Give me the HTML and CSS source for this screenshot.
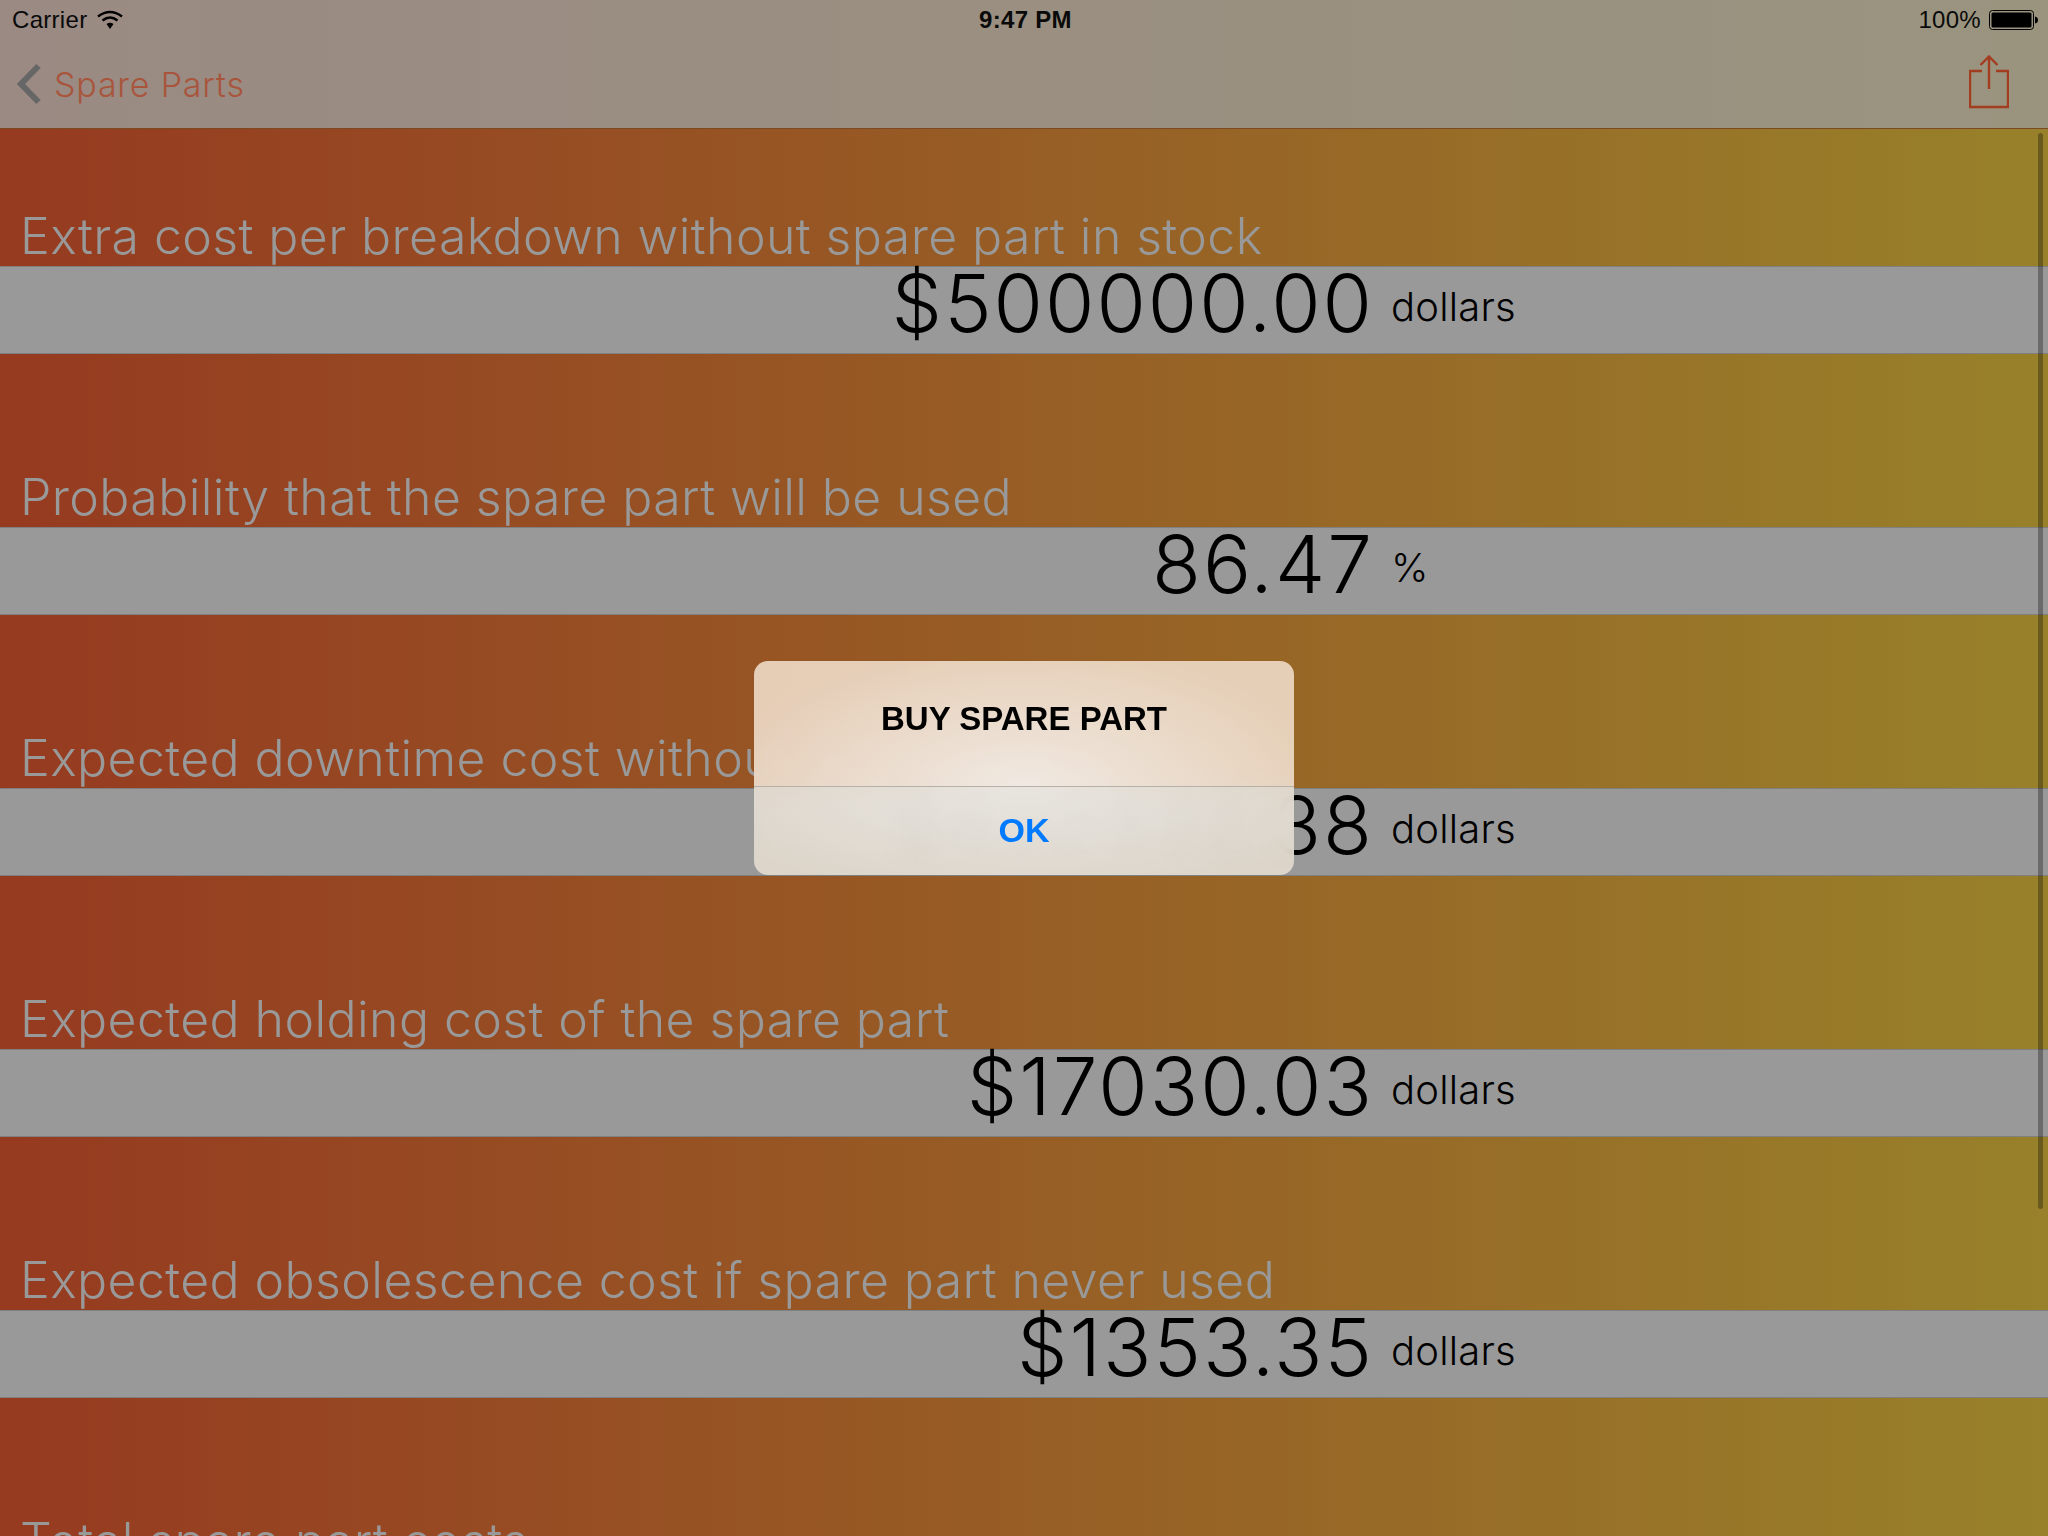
FILE: index.html
```html
<!DOCTYPE html>
<html lang="en">
<head>
    <meta charset="UTF-8">
    <meta name="viewport" content="width=device-width, initial-scale=1.0">
    <title>Spare Parts</title>
    <link rel="stylesheet" href="styles.css">
</head>
<body>
    <div class="screen">
        <header class="top-bar">
            <div class="status-bar">
                <div class="status-left">
                    <span>Carrier</span>
                    <svg class="wifi" width="26" height="20" viewBox="0 0 26 20">
                        <path d="M1 6.5 Q13 -2.5 25 6.5" fill="none" stroke="#000" stroke-width="2.6"/>
                        <path d="M5.5 10.5 Q13 4.5 20.5 10.5" fill="none" stroke="#000" stroke-width="2.6"/>
                        <path d="M9.5 14 Q13 11.4 16.5 14 L13 19 Z" fill="#000"/>
                    </svg>
                </div>
                <div class="status-time">9:47 PM</div>
                <div class="status-right">
                    <span>100%</span>
                    <svg class="battery" width="50" height="20" viewBox="0 0 50 20">
                        <rect x="0.5" y="0.5" width="44" height="19" rx="3" fill="none" stroke="#000"/>
                        <rect x="2.5" y="2.5" width="40" height="15" rx="1.5" fill="#000"/>
                        <path d="M46 6.5 Q49 7 49 10 Q49 13 46 13.5 Z" fill="#000"/>
                    </svg>
                </div>
            </div>
            <nav class="nav-bar">
                <a class="back-link">
                    <svg width="26" height="42" viewBox="0 0 26 42">
                        <path d="M22.5 3 L5 21 L22.5 39" fill="none" stroke="#666" stroke-width="6"/>
                    </svg>
                    <span>Spare Parts</span>
                </a>
                <svg class="share-icon" width="40" height="54" viewBox="0 0 40 54">
                    <path d="M13 16 H1 V52 H39 V16 H27" fill="none" stroke="#a33d20" stroke-width="2.4"/>
                    <path d="M20 1.5 V34 M11.5 10 L20 1.5 L28.5 10" fill="none" stroke="#a33d20" stroke-width="2.4"/>
                </svg>
            </nav>
        </header>

        <main class="list">
            <section class="row first-row">
                <h2 class="row-label">Extra cost per breakdown without spare part in stock</h2>
                <div class="row-value"><span class="amount">$500000.00</span><span class="unit">dollars</span></div>
            </section>
            <section class="row">
                <h2 class="row-label">Probability that the spare part will be used</h2>
                <div class="row-value"><span class="amount">86.47</span><span class="unit">%</span></div>
            </section>
            <section class="row">
                <h2 class="row-label">Expected downtime cost without spare part</h2>
                <div class="row-value"><span class="amount">$432332.38</span><span class="unit">dollars</span></div>
            </section>
            <section class="row">
                <h2 class="row-label">Expected holding cost of the spare part</h2>
                <div class="row-value"><span class="amount">$17030.03</span><span class="unit">dollars</span></div>
            </section>
            <section class="row">
                <h2 class="row-label">Expected obsolescence cost if spare part never used</h2>
                <div class="row-value"><span class="amount">$1353.35</span><span class="unit">dollars</span></div>
            </section>
            <section class="row">
                <h2 class="row-label">Total spare part costs</h2>
            </section>
        </main>

        <div class="scroll-thumb"></div>

        <div class="alert">
            <div class="alert-title">BUY SPARE PART</div>
            <div class="alert-button">OK</div>
        </div>
    </div>
</body>
</html>
```

FILE: styles.css
```css
* {
    box-sizing: border-box;
}
body {
    margin: 0;
    font-family: "Liberation Sans", Arial, sans-serif;
}
.screen {
    position: relative;
    width: 2048px;
    height: 1536px;
    overflow: hidden;
    background: linear-gradient(90deg, #963a20, #98812a);
}

/* top bar */
.top-bar {
    height: 129px;
    background: linear-gradient(90deg, #9a8a83, #9a947f);
    border-bottom: 1px solid #7c4a22;
}
.status-bar {
    display: grid;
    grid-template-columns: 1fr auto 1fr;
    align-items: center;
    height: 40px;
    padding: 0 9px 0 12px;
    font-size: 24px;
    letter-spacing: 0.3px;
    color: #0a0a0a;
}
.status-left, .status-right {
    display: flex;
    align-items: center;
    gap: 8px;
}
.status-left {
    gap: 10px;
}
.status-right {
    justify-content: flex-end;
}
.status-time {
    font-weight: bold;
}
.nav-bar {
    display: flex;
    justify-content: space-between;
    align-items: flex-start;
    padding: 15px 39px 0 16px;
}
.back-link {
    display: flex;
    align-items: center;
    gap: 12px;
    margin-top: 8px;
    font-family: Inter, sans-serif;
    font-weight: 300;
    font-size: 34px;
    letter-spacing: 0.8px;
    color: #a8553c;
}

/* rows */
.row {
    display: flex;
    flex-direction: column;
}
.first-row {
    margin-top: -36px;
}
.row-label {
    display: flex;
    align-items: flex-end;
    height: 173px;
    margin: 0;
    padding: 0 0 1px 20px;
    font-family: Inter, sans-serif;
    font-weight: 300;
    font-size: 50px;
    line-height: 58px;
    letter-spacing: 0.4px;
    white-space: nowrap;
    color: #999;
}
.row-value {
    display: grid;
    grid-template-columns: 1374px 1fr;
    column-gap: 17px;
    align-items: center;
    height: 88px;
    background: #999;
    border-top: 1px solid #808080;
    border-bottom: 1px solid #808080;
    color: #000;
    font-family: Inter, sans-serif;
    font-weight: 300;
}
.amount {
    margin-top: -15px;
    font-size: 80px;
    line-height: 88px;
    letter-spacing: 2px;
    text-align: right;
}
.unit {
    margin-top: -7px;
    font-size: 40px;
    letter-spacing: 0.2px;
}

.scroll-thumb {
    position: absolute;
    top: 133px;
    right: 5px;
    width: 5px;
    height: 1076px;
    border-radius: 3px;
    background: rgba(0, 0, 0, 0.3);
}

/* alert */
.alert {
    position: absolute;
    top: 661px;
    left: 754px;
    width: 540px;
    height: 214px;
    border-radius: 14px;
    overflow: hidden;
    backdrop-filter: blur(14px);
    text-align: center;
}
.alert-title {
    height: 126px;
    padding-top: 40px;
    border-bottom: 1px solid #b5b0a8;
    background: radial-gradient(ellipse at 50% 100%, rgba(244, 238, 232, 0.96), rgba(236, 216, 196, 0.92) 80%);
    font-size: 33px;
    font-weight: bold;
    line-height: 36px;
    color: #000;
}
.alert-button {
    height: 88px;
    padding-top: 23px;
    background: radial-gradient(ellipse at 50% 0%, rgba(238, 235, 230, 0.95), rgba(226, 218, 206, 0.92) 90%);
    font-size: 34px;
    font-weight: bold;
    line-height: 40px;
    color: #007aff;
}
```
